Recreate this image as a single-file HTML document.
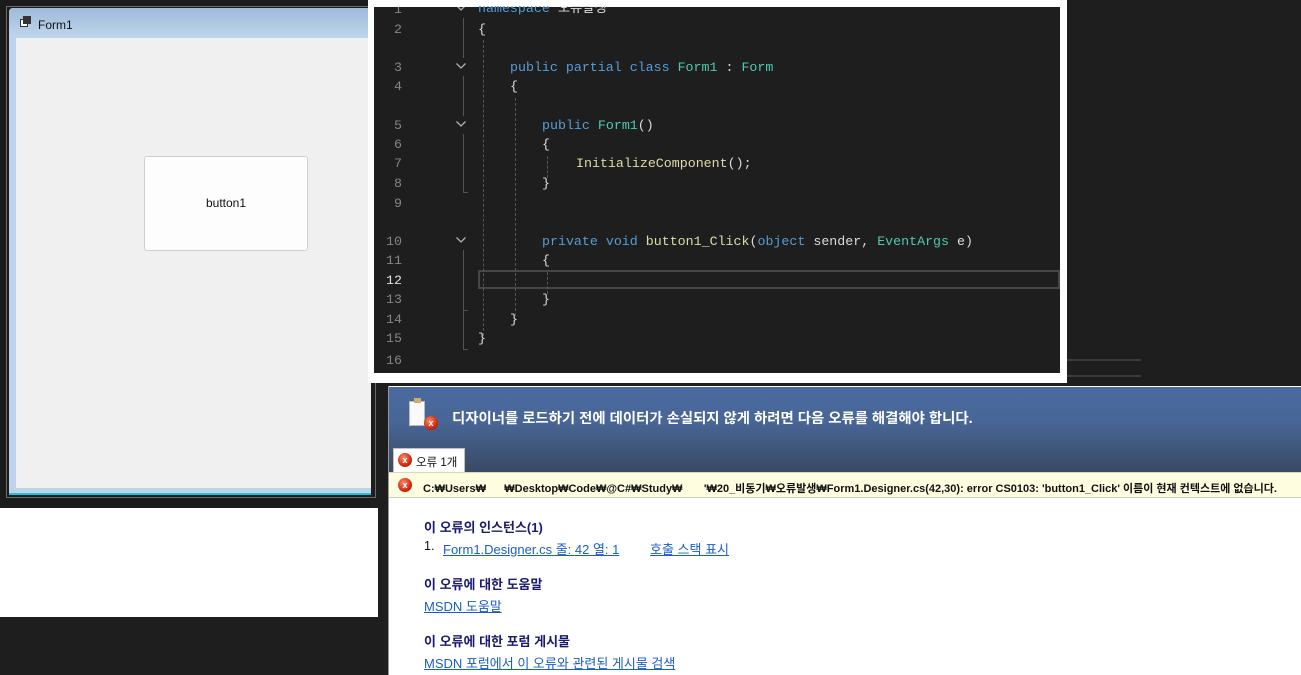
<!DOCTYPE html>
<html><head><meta charset="utf-8"><style>
*{margin:0;padding:0;box-sizing:border-box}
body{width:1301px;height:675px;background:#1e1e1e;position:relative;overflow:hidden;font-family:"Liberation Sans","Noto Sans CJK KR",sans-serif}
.a{position:absolute}
.code{font-family:"Liberation Mono","Noto Sans CJK KR",monospace;font-size:13.3px;white-space:pre;line-height:19px}
.ln{color:#858585;width:30px;text-align:right;left:372px}
.k{color:#569cd6}.t{color:#4ec9b0}.m{color:#dcdcaa}.p{color:#dcdcdc}
.chev{left:455px;width:12px;height:8px}
.h{color:#1a1a6e;font-weight:bold;font-size:13px}
.lk{color:#1a5ec4;text-decoration:underline;font-size:13px}
.xi{width:14px;height:14px;border-radius:50%;background:radial-gradient(circle at 40% 35%,#ff8a6a,#d02a10 60%,#901000);color:#fff;font-size:9px;font-weight:bold;text-align:center;line-height:14px}
</style></head><body>
<div class="a" style="left:0;top:0;width:370px;height:508px;background:#1b1b1b"></div>
<div class="a" style="left:6px;top:6px;width:370px;height:492px;border:1px solid #6a6a6a"></div>
<div class="a" style="left:9px;top:8px;width:362px;height:487px;background:#bcd3ea;border-bottom:2px solid #1fc2e6;border-radius:4px 0 0 0"></div>
<div class="a" style="left:9px;top:8px;width:362px;height:30px;background:linear-gradient(#9fbbd9,#bfd5ec);border-radius:4px 0 0 0"></div>
<div class="a" style="left:20px;top:19px;width:8px;height:8px;background:#fff;border:1px solid #333"></div>
<div class="a" style="left:23px;top:16px;width:8px;height:8px;background:#333;border:1px solid #333"></div>
<div class="a" style="left:38px;top:18px;font-size:12px;color:#111">Form1</div>
<div class="a" style="left:16px;top:38px;width:355px;height:450px;background:#f0f0f0"></div>
<div class="a" style="left:144px;top:156px;width:164px;height:95px;background:#fdfdfd;border:1px solid #cfcfcf;border-radius:3px;font-size:12px;color:#111;text-align:center;line-height:93px">button1</div>
<div class="a" style="left:0;top:508px;width:378px;height:109px;background:#fff"></div>
<div class="a" style="left:368px;top:0;width:699px;height:383px;background:#fff"></div>
<div class="a" style="left:374px;top:7px;width:686px;height:366px;background:#1e1e1e"></div>
<div class="a" style="left:1067px;top:359px;width:74px;height:2px;background:#3a3a3a"></div>
<div class="a" style="left:1067px;top:375px;width:74px;height:2px;background:#3a3a3a"></div>
<div class="a" style="left:478px;top:270px;width:582px;height:19px;border:2px solid #464646"></div>
<div class="a" style="left:463px;top:18px;width:1px;height:40px;background:#555"></div>
<div class="a" style="left:463px;top:76px;width:1px;height:40px;background:#555"></div>
<div class="a" style="left:463px;top:134px;width:1px;height:58px;background:#555"></div>
<div class="a" style="left:463px;top:192px;width:5px;height:1px;background:#555"></div>
<div class="a" style="left:463px;top:250px;width:1px;height:60px;background:#555"></div>
<div class="a" style="left:463px;top:310px;width:5px;height:1px;background:#555"></div>
<div class="a" style="left:463px;top:310px;width:1px;height:40px;background:#555"></div>
<div class="a" style="left:463px;top:349px;width:5px;height:1px;background:#555"></div>
<div class="a" style="left:483px;top:40px;width:0;height:296px;border-left:1px dashed #555"></div>
<div class="a" style="left:515px;top:98px;width:0;height:218px;border-left:1px dashed #555"></div>
<div class="a" style="left:547px;top:156px;width:0;height:22px;border-left:1px dashed #555"></div>
<div class="a" style="left:547px;top:272px;width:0;height:22px;border-left:1px dashed #555"></div>
<div class="a code ln" style="top:0">1</div>
<div class="a code ln" style="top:20px">2</div>
<div class="a code ln" style="top:58px">3</div>
<div class="a code ln" style="top:77px">4</div>
<div class="a code ln" style="top:116px">5</div>
<div class="a code ln" style="top:135px">6</div>
<div class="a code ln" style="top:154px">7</div>
<div class="a code ln" style="top:174px">8</div>
<div class="a code ln" style="top:194px">9</div>
<div class="a code ln" style="top:232px">10</div>
<div class="a code ln" style="top:251px">11</div>
<div class="a code ln" style="top:271px;color:#e0e0e0">12</div>
<div class="a code ln" style="top:290px">13</div>
<div class="a code ln" style="top:310px">14</div>
<div class="a code ln" style="top:329px">15</div>
<div class="a code ln" style="top:351px">16</div>
<svg class="a chev" style="top:4px" viewBox="0 0 12 8"><path d="M1.5 1.5 L6 6 L10.5 1.5" stroke="#b0b0b0" stroke-width="1.3" fill="none"/></svg>
<svg class="a chev" style="top:62px" viewBox="0 0 12 8"><path d="M1.5 1.5 L6 6 L10.5 1.5" stroke="#b0b0b0" stroke-width="1.3" fill="none"/></svg>
<svg class="a chev" style="top:120px" viewBox="0 0 12 8"><path d="M1.5 1.5 L6 6 L10.5 1.5" stroke="#b0b0b0" stroke-width="1.3" fill="none"/></svg>
<svg class="a chev" style="top:236px" viewBox="0 0 12 8"><path d="M1.5 1.5 L6 6 L10.5 1.5" stroke="#b0b0b0" stroke-width="1.3" fill="none"/></svg>
<div class="a" style="left:374px;top:0;width:686px;height:7px;background:#fff"></div>
<div class="a code" style="left:478px;top:-1px;clip-path:inset(7px 0 0 0)"><span class="k">namespace</span> <span class="p">오류발생</span></div>
<div class="a code p" style="left:478px;top:20px">{</div>
<div class="a code" style="left:510px;top:58px"><span class="k">public partial class</span> <span class="t">Form1</span> <span class="p">:</span> <span class="t">Form</span></div>
<div class="a code p" style="left:510px;top:77px">{</div>
<div class="a code" style="left:542px;top:116px"><span class="k">public</span> <span class="t">Form1</span><span class="p">()</span></div>
<div class="a code p" style="left:542px;top:135px">{</div>
<div class="a code" style="left:576px;top:154px"><span class="m">InitializeComponent</span><span class="p">();</span></div>
<div class="a code p" style="left:542px;top:174px">}</div>
<div class="a code" style="left:542px;top:232px"><span class="k">private void</span> <span class="m">button1_Click</span><span class="p">(</span><span class="k">object</span> <span class="p">sender,</span> <span class="t">EventArgs</span> <span class="p">e)</span></div>
<div class="a code p" style="left:542px;top:251px">{</div>
<div class="a code p" style="left:542px;top:290px">}</div>
<div class="a code p" style="left:510px;top:310px">}</div>
<div class="a code p" style="left:478px;top:329px">}</div>
<div class="a" style="left:388px;top:386px;width:913px;height:289px;background:#fff;border-left:1px solid #999"></div>
<div class="a" style="left:389px;top:387px;width:912px;height:85px;background:linear-gradient(#4a6ba0 0%,#486697 40%,#3a4a64 100%)"></div>
<div class="a" style="left:409px;top:401px;width:16px;height:25px;background:#fafafa;border:1px solid #bbb"></div>
<div class="a" style="left:414px;top:398px;width:7px;height:5px;background:#c8b070"></div>
<div class="a xi" style="left:424px;top:416px">x</div>
<div class="a" style="left:452px;top:407px;color:#fff;font-size:14.4px;font-weight:bold">디자이너를 로드하기 전에 데이터가 손실되지 않게 하려면 다음 오류를 해결해야 합니다.</div>
<div class="a" style="left:393px;top:448px;width:72px;height:25px;background:#fff;border:1px solid #c0c0c0;border-bottom:none"></div>
<div class="a xi" style="left:398px;top:453px">x</div>
<div class="a" style="left:416px;top:454px;font-size:11.5px;color:#111">오류 1개</div>
<div class="a" style="left:389px;top:472px;width:912px;height:26px;background:#fffde0;border-top:1px solid #d8d8c0;border-bottom:1px solid #d0d0c0"></div>
<div class="a xi" style="left:398px;top:478px">x</div>
<div class="a" style="left:423px;top:480px;font-size:11px;color:#111;font-weight:bold;white-space:pre">C:₩Users₩      ₩Desktop₩Code₩@C#₩Study₩       '₩20_비동기₩오류발생₩Form1.Designer.cs(42,30): error CS0103: 'button1_Click' 이름이 현재 컨텍스트에 없습니다.</div>
<div class="a h" style="left:424px;top:517px">이 오류의 인스턴스(1)</div>
<div class="a" style="left:424px;top:539px;font-size:12.5px;color:#111">1.</div>
<div class="a lk" style="left:443px;top:539px">Form1.Designer.cs 줄: 42 열: 1</div>
<div class="a lk" style="left:650px;top:539px">호출 스택 표시</div>
<div class="a h" style="left:424px;top:574px">이 오류에 대한 도움말</div>
<div class="a lk" style="left:424px;top:596px">MSDN 도움말</div>
<div class="a h" style="left:424px;top:631px">이 오류에 대한 포럼 게시물</div>
<div class="a lk" style="left:424px;top:653px">MSDN 포럼에서 이 오류와 관련된 게시물 검색</div>
</body></html>
